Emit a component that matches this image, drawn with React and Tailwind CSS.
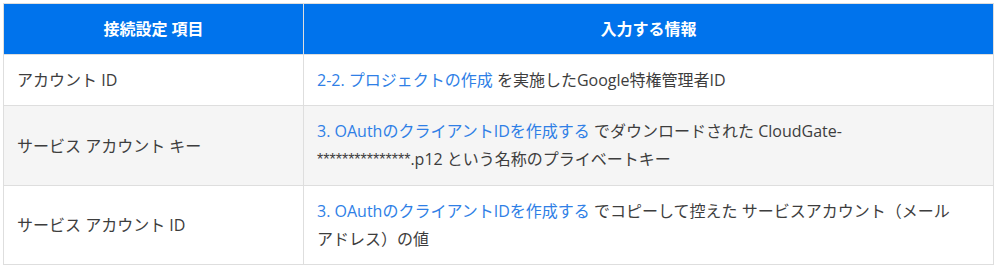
const rows = [
  {
    item: 'アカウント ID',
    link: '2-2. プロジェクトの作成',
    rest: <> を実施したGoogle特権管理者ID</>,
  },
  {
    item: 'サービス アカウント キー',
    link: '3. OAuthのクライアントIDを作成する',
    rest: (
      <>
        {' '}でダウンロードされた CloudGate-
        <br />
        <span style={{ fontFamily: '"Liberation Sans", sans-serif' }}>***************</span>
        .p12 という名称のプライベートキー
      </>
    ),
  },
  {
    item: 'サービス アカウント ID',
    link: '3. OAuthのクライアントIDを作成する',
    rest: (
      <>
        {' '}でコピーして控えた サービスアカウント（メール
        <br />
        アドレス）の値
      </>
    ),
  },
]

export default function App() {
  return (
    <div
      className="w-[1000px] h-[268px] bg-white pl-[3px] pt-[3px]"
      style={{ fontFamily: '"Open Sans", "Noto Sans CJK JP", sans-serif' }}
    >
      <table className="w-[991px] border-collapse text-[16px] leading-[28px] text-[#3d3d3d]">
        <thead>
          <tr className="bg-[#0073ec] text-white">
            <th className="w-[300px] h-[51px] border border-[#dedede] font-bold text-center">接続設定 項目</th>
            <th className="h-[51px] border border-[#dedede] font-bold text-center">入力する情報</th>
          </tr>
        </thead>
        <tbody>
          {rows.map((r, i) => (
            <tr key={i} className={i === 1 ? 'bg-[#f5f5f5]' : 'bg-white'}>
              <td className="border border-[#dedede] px-[13px] py-[11px] align-middle">{r.item}</td>
              <td className="border border-[#dedede] px-[13px] py-[11px] align-middle">
                <a className="text-[#2f7fe6]">{r.link}</a>
                {r.rest}
              </td>
            </tr>
          ))}
        </tbody>
      </table>
    </div>
  )
}
